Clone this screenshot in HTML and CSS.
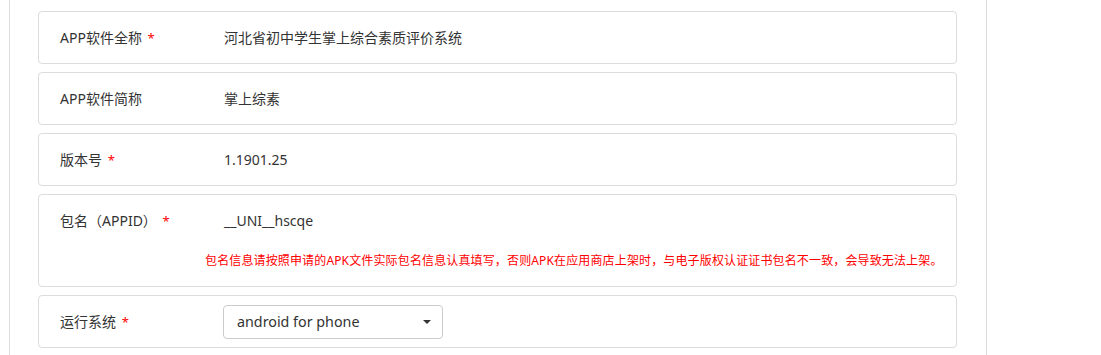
FILE: index.html
```html
<!DOCTYPE html>
<html lang="zh-CN">
<head>
  <meta charset="UTF-8">
  <title>APP信息填写</title>
  <link rel="stylesheet" href="styles.css">
</head>
<body>

  <div class="page">
    <div class="field">
      <label class="field-label">APP软件全称 <span class="req">*</span></label>
      <div class="field-value">河北省初中学生掌上综合素质评价系统</div>
    </div>

    <div class="field">
      <label class="field-label">APP软件简称</label>
      <div class="field-value">掌上综素</div>
    </div>

    <div class="field">
      <label class="field-label">版本号 <span class="req">*</span></label>
      <div class="field-value">1.1901.25</div>
    </div>

    <div class="field field-tall">
      <div class="field-row">
        <label class="field-label">包名（APPID） <span class="req">*</span></label>
        <div class="field-value">__UNI__hscqe</div>
      </div>
      <p class="field-notice">包名信息请按照申请的APK文件实际包名信息认真填写，否则APK在应用商店上架时，与电子版权认证证书包名不一致，会导致无法上架。</p>
    </div>

    <div class="field">
      <label class="field-label">运行系统 <span class="req">*</span></label>
      <div class="select-box">
        <span>android for phone</span>
        <span class="caret"></span>
      </div>
    </div>
  </div>

</body>
</html>
```

FILE: styles.css
```css
:root {
  --line: #dcdcdc;
  --text: #333333;
  --req: #ff0000;
}

body {
  margin: 0;
  font-family: "Noto Sans", "Noto Sans CJK SC", sans-serif;
  font-size: 14px;
  color: var(--text);
  background: #fff;
}

.page {
  margin-left: 9px;
  width: 919px;
  min-height: 355px;
  padding: 11px 29px 0 28px;
  border-left: 1px solid var(--line);
  border-right: 1px solid var(--line);
}

/* one form row */
.field {
  display: flex;
  align-items: center;
  height: 51px;
  padding: 0 21px;
  margin-bottom: 8px;
  border: 1px solid var(--line);
  border-radius: 4px;
}

.field-tall {
  display: block;
  height: auto;
}

.field-row {
  display: flex;
  align-items: center;
  height: 51px;
}

.field-label {
  width: 164px;
  flex-shrink: 0;
  line-height: 20px;
}

.req {
  margin-left: 2px;
  color: var(--req);
  font-size: 13px;
}

.field-value {
  line-height: 20px;
}

.field-notice {
  margin: 7px 0 0;
  padding: 0 0 17px 145px;
  font-size: 12px;
  line-height: 16px;
  letter-spacing: 0.14px;
  white-space: nowrap;
  color: var(--req);
}

.select-box {
  display: flex;
  align-items: center;
  justify-content: space-between;
  box-sizing: border-box;
  width: 220px;
  height: 34px;
  padding: 0 11px 0 13px;
  margin-left: -1px;
  border: 1px solid #cccccc;
  border-radius: 4px;
  font-size: 14.3px;
}

.caret {
  width: 0;
  height: 0;
  border-left: 4px solid transparent;
  border-right: 4px solid transparent;
  border-top: 4px solid #333;
}
```
